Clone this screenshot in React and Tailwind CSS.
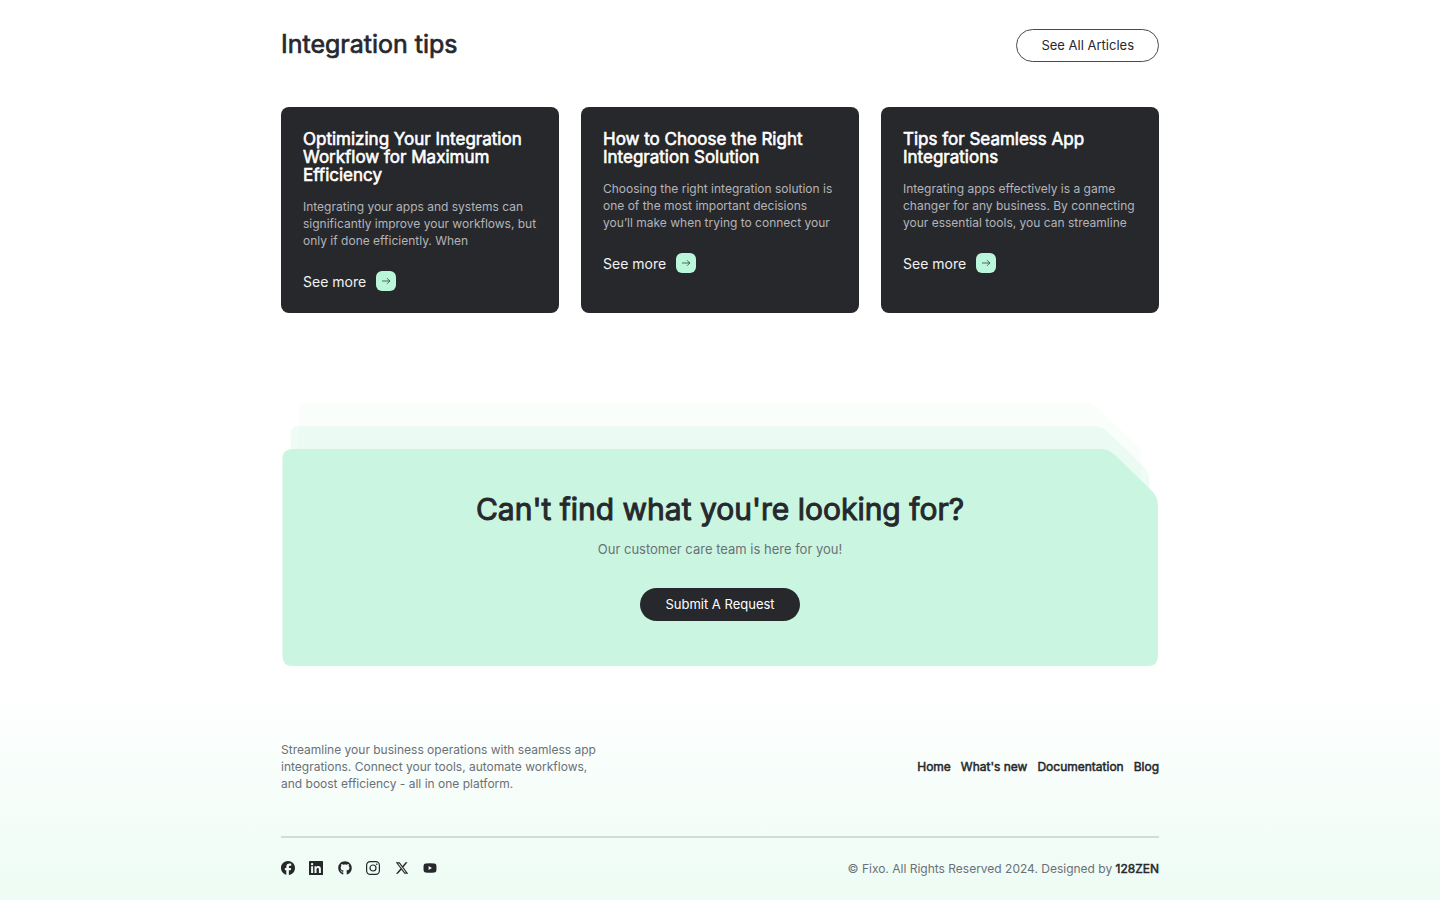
import { FaFacebook, FaGithub, FaXTwitter } from "react-icons/fa6";

const articles = [
  {
    title: "Optimizing Your Integration Workflow for Maximum Efficiency",
    text: "Integrating your apps and systems can significantly improve your workflows, but only if done efficiently. When",
  },
  {
    title: "How to Choose the Right Integration Solution",
    text: "Choosing the right integration solution is one of the most important decisions you’ll make when trying to connect your",
  },
  {
    title: "Tips for Seamless App Integrations",
    text: "Integrating apps effectively is a game changer for any business. By connecting your essential tools, you can streamline",
  },
];

function Article({ title, text }) {
  return (
    <article className="rounded-lg bg-[#27282c] px-[22px] pt-[23px] pb-[22px]">
      <h3 className="text-[17px] leading-[18px] text-white [-webkit-text-stroke:0.6px_currentColor]">{title}</h3>
      <p className="mt-[14px] text-[12px] leading-[17px] text-[#b3b4b8]">{text}</p>
      <a href="#" className="mt-[22px] flex h-5 items-center gap-[10px] text-[14px] text-[#f1f2f3]">
        See more
        <span className="flex size-5 items-center justify-center rounded-md bg-[#baf6da]">
          <svg viewBox="0 0 10 10" className="size-[10px]" fill="none" stroke="#27282c" strokeWidth="0.7" aria-hidden="true">
            <path d="M1 5H9M6 2.2l2.800 2.800-2.800 2.800" />
          </svg>
        </span>
      </a>
    </article>
  );
}

function LinkedinIcon() {
  return (
    <svg viewBox="0 0 14 14" className="size-[14px]" fill="currentColor" aria-hidden="true">
      <path
        fillRule="evenodd"
        d="M.6 0h12.800a.6.6 0 0 1 .6.6v12.800a.6.6 0 0 1-.6.6H.6a.6.6 0 0 1-.6-.6V.6A.6.6 0 0 1 .6 0ZM2.1 5.3v6.6h2V5.3ZM3.1 1.9a1.2 1.2 0 1 0 0 2.4 1.2 1.2 0 0 0 0-2.4ZM5.5 5.3v6.6h2V8.6c0-1 .4-1.7 1.3-1.7s1.1.7 1.1 1.7v3.3h2V8.2c0-2-.9-3.1-2.5-3.1-1 0-1.6.5-1.9 1.1v-.9Z"
      />
    </svg>
  );
}

function InstagramIcon() {
  return (
    <svg viewBox="0 0 14 14" className="size-[14px]" fill="none" stroke="currentColor" strokeWidth="1.2" aria-hidden="true">
      <rect x="0.6" y="0.6" width="12.8" height="12.8" rx="3.6" />
      <circle cx="7" cy="7" r="3" />
      <circle cx="10.7" cy="3.3" r="0.8" fill="currentColor" stroke="none" />
    </svg>
  );
}

function YoutubeIcon() {
  return (
    <svg viewBox="0 0 14 14" className="size-[14px]" fill="currentColor" aria-hidden="true">
      <path
        fillRule="evenodd"
        d="M2.6 2.4Q7 2 11.4 2.4Q13.2 2.6 13.4 4.4Q13.6 7 13.4 9.6Q13.2 11.4 11.4 11.6Q7 12 2.6 11.6Q.8 11.4.6 9.6Q.4 7 .6 4.4Q.8 2.6 2.6 2.4ZM5.6 5v4L9 7Z"
      />
    </svg>
  );
}

const socials = [
  { name: "Facebook", icon: <FaFacebook className="size-[14px]" /> },
  { name: "LinkedIn", icon: <LinkedinIcon /> },
  { name: "GitHub", icon: <FaGithub className="size-[14px]" /> },
  { name: "Instagram", icon: <InstagramIcon /> },
  { name: "X", icon: <FaXTwitter className="size-[14px]" /> },
  { name: "YouTube", icon: <YoutubeIcon /> },
];

export default function App() {
  return (
    <div className="bg-white font-[Inter,'Liberation_Sans',sans-serif] text-[#27282c]">
      <main className="mx-auto w-full max-w-[878px] pt-[29px]">
        <section>
          <div className="flex items-start justify-between">
            <h2 className="text-[25px] leading-[30px] [-webkit-text-stroke:0.7px_currentColor]">Integration tips</h2>
            <a href="#" className="flex h-[33px] items-center rounded-full border border-[#4a4b4f] px-6 text-[13px]">
              See All Articles
            </a>
          </div>
          <div className="mt-[45px] grid grid-cols-1 gap-[22px] md:grid-cols-3">
            {articles.map((a) => (
              <Article key={a.title} {...a} />
            ))}
          </div>
        </section>

        <section className="relative mt-[90px] flex flex-col items-center pt-[86px] pb-[45px] text-center">
          <svg
            viewBox="0 0 878 263"
            preserveAspectRatio="none"
            className="absolute inset-0 size-full"
            aria-hidden="true"
          >
            <path fill="#f9fefb" d="M18 60V8Q18 0 26 0H803Q811 0 817 5L855 41Q860 46 860 53V100H18Z" />
            <path fill="#caf6e1" fillOpacity="0.3" d="M9.500 100V31Q9.500 23 17.500 23H812Q820 23 826 28L863 64Q868.500 70 868.500 77V100Z" />
            <path
              fill="#caf6e1"
              d="M1.500 56Q1.500 46 11.500 46H820Q828 46 834 52L871 88Q877 94 877 103V253Q877 263 867 263H11.500Q1.500 263 1.500 253Z"
            />
          </svg>
          <h2 className="relative text-[30px] leading-[40px] [-webkit-text-stroke:1px_currentColor]">
            Can't find what you're looking for?
          </h2>
          <p className="relative mt-[10px] text-[13px] leading-[20px] text-[#6b7078]">
            Our customer care team is here for you!
          </p>
          <button type="button" className="relative mt-[29px] h-[33px] rounded-full bg-[#27282c] px-[25px] text-[13px] text-white">
            Submit A Request
          </button>
        </section>
      </main>

      <footer className="mt-[23px] bg-linear-to-b from-white to-[#edfcf4]">
        <div className="mx-auto w-full max-w-[878px] pt-[52px] pb-[23px]">
          <div className="flex items-center justify-between">
            <p className="max-w-[320px] text-[12px] leading-[17px] text-[#6b7078]">
              Streamline your business operations with seamless app integrations. Connect your tools, automate workflows, and
              boost efficiency - all in one platform.
            </p>
            <nav className="flex gap-[10px] text-[12px] leading-[17px] [-webkit-text-stroke:0.5px_currentColor]">
              <a href="#">Home</a>
              <a href="#">What's new</a>
              <a href="#">Documentation</a>
              <a href="#">Blog</a>
            </nav>
          </div>
          <div className="mt-11 flex items-start justify-between border-t-2 border-[#d0dcde] pt-[22px]">
            <div className="flex h-4 w-[156px] items-center justify-between">
              {socials.map((s) => (
                <a key={s.name} href="#" aria-label={s.name} className="flex size-[14px] items-center justify-center">
                  {s.icon}
                </a>
              ))}
            </div>
            <p className="text-[12px] leading-[17px] text-[#6b7078]">
              © Fixo. All Rights Reserved 2024. Designed by{" "}
              <a href="#" className="text-[#27282c] [-webkit-text-stroke:0.5px_currentColor]">
                128ZEN
              </a>
            </p>
          </div>
        </div>
      </footer>
    </div>
  );
}
